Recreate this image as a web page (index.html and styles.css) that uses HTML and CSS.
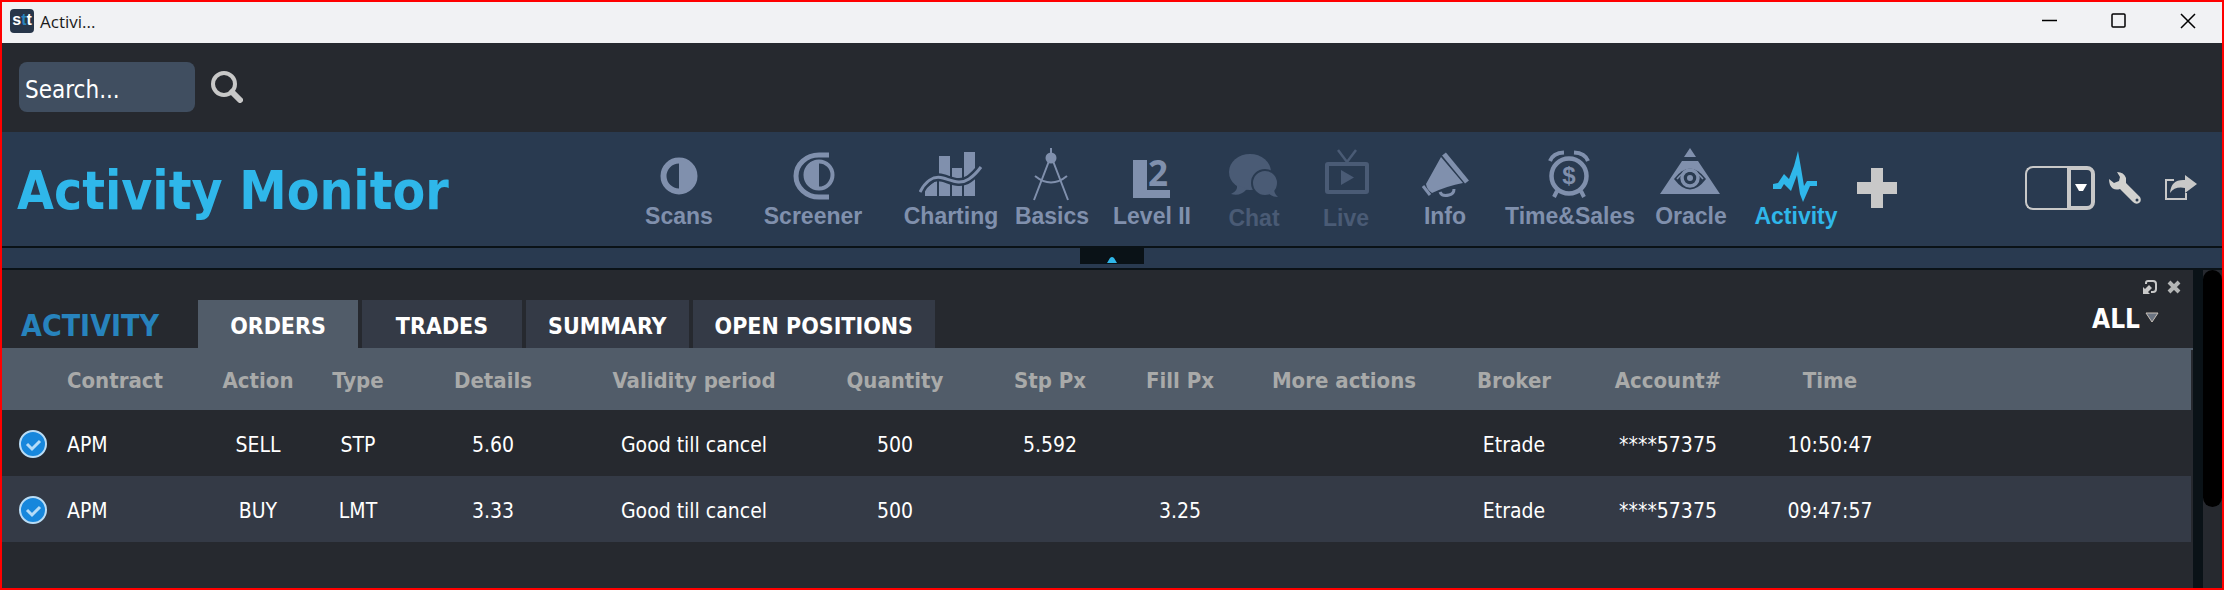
FILE: index.html
```html
<!DOCTYPE html>
<html lang="en">
<head>
    <meta charset="UTF-8">
    <meta name="viewport" content="width=device-width, initial-scale=1.0">
    <title>Activity Monitor</title>
    <link rel="stylesheet" href="styles.css">
</head>
<body>
    <div class="window">
        <div class="titlebar">
            <span class="app-icon">s<span class="app-icon-t">t</span>t</span>
            <span class="window-title">Activi...</span>
            <div class="window-controls">
                <button class="win-btn" aria-label="Minimize">
                    <svg width="16" height="16" viewBox="0 0 16 16"><path d="M0 7.500H15"/></svg>
                </button>
                <button class="win-btn" aria-label="Maximize">
                    <svg width="16" height="16" viewBox="0 0 16 16"><rect x="1" y="1" width="13" height="13" rx="1"/></svg>
                </button>
                <button class="win-btn" aria-label="Close">
                    <svg width="16" height="16" viewBox="0 0 16 16"><path d="M1 1L15 15M15 1L1 15"/></svg>
                </button>
            </div>
        </div>

        <form class="searchbar">
            <input class="search-input" type="text" placeholder="Search..." aria-label="Search">
            <button class="icon-btn" type="button" aria-label="Search">
                <svg width="32" height="32" viewBox="0 0 32 32"><circle cx="13" cy="13" r="11" fill="none" stroke="#c8c8c8" stroke-width="4"/><path d="M21 21L29 29" stroke="#c8c8c8" stroke-width="6" stroke-linecap="round"/></svg>
            </button>
        </form>

        <header class="header">
            <h1 class="page-title">Activity Monitor</h1>
            <nav class="nav">
                <a class="nav-item" href="#">
                    <svg viewBox="0 0 64 56"><circle cx="32" cy="30" r="15.500" fill="none" stroke="currentColor" stroke-width="6"/><path d="M32 14A16 16 0 0 1 32 46Z"/></svg>
                    Scans
                </a>
                <a class="nav-item" href="#">
                    <svg viewBox="0 0 64 56"><path d="M48 9H38A23 21 0 0 0 38 51H48" fill="none" stroke="currentColor" stroke-width="5"/><circle cx="38" cy="29" r="13.500" fill="none" stroke="currentColor" stroke-width="4"/><path d="M38 14A15 15 0 0 0 38 44Z"/></svg>
                    Screener
                </a>
                <a class="nav-item" href="#">
                    <svg viewBox="0 0 64 56"><path d="M6 50V43L18 34V50ZM20 10H31V50H20ZM33 22H43V50H33ZM45 6H56V50H45Z"/><path d="M1 46C6 36 14 29 24 32C34 35 41 39 50 33C56 29 59 25 62 21" fill="none" stroke="#293a50" stroke-width="8"/><path d="M1 46C6 36 14 29 24 32C34 35 41 39 50 33C56 29 59 25 62 21" fill="none" stroke="currentColor" stroke-width="3"/></svg>
                    Charting
                </a>
                <a class="nav-item" href="#">
                    <svg viewBox="0 0 64 56"><circle cx="31" cy="12" r="5.500"/><path d="M31 2V8M29 15L14 54M33 15L48 54" fill="none" stroke="currentColor" stroke-width="2"/><path d="M15 30Q31 43 47 30" fill="none" stroke="currentColor" stroke-width="2"/></svg>
                    Basics
                </a>
                <a class="nav-item" href="#">
                    <svg viewBox="0 0 64 56"><path d="M13 14H27V44H50V52H13Z"/><text class="level-two" x="28" y="40">2</text></svg>
                    Level II
                </a>
                <a class="nav-item dim" href="#">
                    <svg viewBox="0 0 64 56"><ellipse cx="28" cy="26" rx="21" ry="18"/><path d="M15 39Q16 45 9 48Q18 51 25 43Z"/><g stroke="#293a50" stroke-width="2"><circle cx="43" cy="37" r="13"/></g><path d="M46 47Q50 51 56 51Q52 48 52 42Z"/></svg>
                    Chat
                </a>
                <a class="nav-item dim" href="#">
                    <svg viewBox="0 0 64 56"><rect x="13" y="18" width="40" height="28" rx="1" fill="none" stroke="currentColor" stroke-width="4"/><path d="M27 24L40 31.500L27 39Z"/><path d="M24 4L33 16L42 4" fill="none" stroke="currentColor" stroke-width="2.500"/></svg>
                    Live
                </a>
                <a class="nav-item" href="#">
                    <svg viewBox="0 0 64 56"><path d="M28 11L50 37Q34 40 19 47Q14 44 13 38Z"/><path d="M31 8L54 36" fill="none" stroke="currentColor" stroke-width="5"/><path d="M10 40L17 49" fill="none" stroke="currentColor" stroke-width="3"/><path d="M27 46Q29 51 36 49Q41 48 41 43" fill="none" stroke="currentColor" stroke-width="3"/></svg>
                    Info
                </a>
                <a class="nav-item" href="#">
                    <svg viewBox="0 0 64 56"><circle cx="31" cy="30" r="17.500" fill="none" stroke="currentColor" stroke-width="4.500"/><path d="M12 15Q15 7 26 6.500M50 15Q47 7 36 6.500" fill="none" stroke="currentColor" stroke-width="4"/><path d="M19 45L16 51M43 45L46 51" stroke="currentColor" stroke-width="4"/><text class="dollar" x="31" y="38">$</text></svg>
                    Time&amp;Sales
                </a>
                <a class="nav-item" href="#">
                    <svg viewBox="0 0 64 56"><path d="M31 2L37 11H25ZM23 15H39L61 48H1Z"/><path d="M15 33Q31 12 47 33Q31 54 15 33Z" fill="#293a50"/><path d="M18 33Q31 17 44 33" fill="none" stroke="currentColor" stroke-width="1.500"/><circle cx="31" cy="32" r="8" fill="none" stroke="currentColor" stroke-width="3.500"/><circle cx="31" cy="32" r="3"/></svg>
                    Oracle
                </a>
                <a class="nav-item active" href="#">
                    <svg viewBox="0 0 64 56"><path d="M9 38L14 37L20 28L25 33L30 20L34 5L37 22L40 40L43 35H53V40H46L39 56L36 48L33 29L27 45L20 38L17 43H9Z"/></svg>
                    Activity
                </a>
                <button class="icon-btn add-btn" aria-label="Add">
                    <svg width="40" height="40" viewBox="0 0 40 40"><path d="M14 0H26V14H40V26H26V40H14V26H0V14H14Z" fill="#c8c8c8"/></svg>
                </button>
            </nav>
            <div class="tools">
                <div class="combo">
                    <select class="combo-select" aria-label="Layout"><option></option></select>
                    <button class="combo-arrow" aria-label="Open layouts">
                        <svg width="12" height="8" viewBox="0 0 12 8"><path d="M0 0H12L8 7H4Z" fill="#ffffff"/></svg>
                    </button>
                </div>
                <button class="icon-btn" aria-label="Settings">
                    <svg width="32" height="32" viewBox="0 0 32 32"><path d="M8 0Q15 0 17 6L17 11L31 25Q33 29 30 31Q27 33 24 30L11 17Q4 19 1 13Q0 10 0 7L5 11L10 9L11 5Z" fill="#d2d2cf"/><circle cx="28" cy="28" r="1.500" fill="#293a50"/></svg>
                </button>
                <button class="icon-btn" aria-label="Share">
                    <svg width="32" height="26" viewBox="0 0 32 26"><path d="M9 5H1V24H21V18" fill="none" stroke="#c8c8c8" stroke-width="2"/><path d="M5 18Q6 4 20 5V0L32 9L20 18V13Q10 11 5 18Z" fill="#c8c8c8"/></svg>
                </button>
            </div>
        </header>

        <div class="splitter">
            <button class="collapse-btn" aria-label="Collapse">
                <svg width="10" height="6" viewBox="0 0 10 6"><path d="M0 6L3 1Q5 -1 7 1L10 6Z" fill="#2fb7ea"/></svg>
            </button>
        </div>

        <div class="workspace">
            <main class="panel">
                <div class="panel-head">
                    <h2 class="panel-title">ACTIVITY</h2>
                    <div class="tabs">
                        <button class="tab selected">ORDERS</button>
                        <button class="tab">TRADES</button>
                        <button class="tab">SUMMARY</button>
                        <button class="tab">OPEN POSITIONS</button>
                    </div>
                    <div class="panel-side">
                        <div class="panel-actions">
                            <button class="icon-btn" aria-label="Detach">
                                <svg width="14" height="14" viewBox="0 0 14 14"><path d="M3 4V3Q3 1 5 1H10Q13 1 13 4V9Q13 12 10 12H8" fill="none" stroke="#c8c8c8" stroke-width="2"/><path d="M0 14V7L2 9L6 5L9 8L5 12L7 14Z" fill="#c8c8c8"/></svg>
                            </button>
                            <button class="icon-btn" aria-label="Close panel">
                                <svg width="14" height="14" viewBox="0 0 14 14"><path d="M2 2L12 12M12 2L2 12" stroke="#b4b6b6" stroke-width="4"/></svg>
                            </button>
                        </div>
                        <button class="filter-btn">
                            ALL
                            <svg width="14" height="11" viewBox="0 0 14 11"><path d="M1 1H13L7 10Z" fill="#6b7482" stroke="#c8c0b8" stroke-width="1"/></svg>
                        </button>
                    </div>
                </div>
                <table class="orders">
                    <colgroup>
                        <col class="col-status"><col class="col-contract"><col class="col-action"><col class="col-type">
                        <col class="col-details"><col class="col-validity"><col class="col-details"><col class="col-stp">
                        <col class="col-fill"><col class="col-more"><col class="col-stp"><col class="col-account">
                        <col class="col-time"><col>
                    </colgroup>
                    <thead>
                        <tr>
                            <th></th>
                            <th class="left">Contract</th>
                            <th>Action</th>
                            <th>Type</th>
                            <th>Details</th>
                            <th>Validity period</th>
                            <th>Quantity</th>
                            <th>Stp Px</th>
                            <th>Fill Px</th>
                            <th>More actions</th>
                            <th>Broker</th>
                            <th>Account#</th>
                            <th>Time</th>
                            <th></th>
                        </tr>
                    </thead>
                    <tbody>
                        <tr>
                            <td class="status"><svg width="28" height="28" viewBox="0 0 28 28"><circle cx="14" cy="14" r="13" fill="#1787dc" stroke="#b9dcf5" stroke-width="2"/><path d="M8 14L13 19L21 11" fill="none" stroke="#b5dcf8" stroke-width="3"/></svg></td>
                            <td class="left">APM</td>
                            <td>SELL</td>
                            <td>STP</td>
                            <td>5.60</td>
                            <td>Good till cancel</td>
                            <td>500</td>
                            <td>5.592</td>
                            <td></td>
                            <td></td>
                            <td>Etrade</td>
                            <td>****57375</td>
                            <td>10:50:47</td>
                            <td></td>
                        </tr>
                        <tr>
                            <td class="status"><svg width="28" height="28" viewBox="0 0 28 28"><circle cx="14" cy="14" r="13" fill="#1787dc" stroke="#b9dcf5" stroke-width="2"/><path d="M8 14L13 19L21 11" fill="none" stroke="#b5dcf8" stroke-width="3"/></svg></td>
                            <td class="left">APM</td>
                            <td>BUY</td>
                            <td>LMT</td>
                            <td>3.33</td>
                            <td>Good till cancel</td>
                            <td>500</td>
                            <td></td>
                            <td>3.25</td>
                            <td></td>
                            <td>Etrade</td>
                            <td>****57375</td>
                            <td>09:47:57</td>
                            <td></td>
                        </tr>
                    </tbody>
                </table>
            </main>
            <div class="scroll-track">
                <div class="scroll-thumb"></div>
            </div>
        </div>
    </div>
</body>
</html>
```

FILE: styles.css
```css
* {
    box-sizing: border-box;
}

body {
    margin: 0;
    font-family: "DejaVu Sans Condensed", "DejaVu Sans", sans-serif;
    font-size: 21px;
    color: #ffffff;
    background-color: #26292f;
}

button {
    font: inherit;
    color: inherit;
    background: none;
    border: none;
    padding: 0;
    cursor: pointer;
}

svg {
    display: block;
}

.window {
    display: flex;
    flex-direction: column;
    min-height: 100vh;
    border: 2px solid #ff0000;
}

/* Title bar */
.titlebar {
    display: flex;
    align-items: center;
    height: 41px;
    padding-left: 8px;
    background-color: #f1f2f4;
    color: #1b1b1b;
}

.app-icon {
    width: 24px;
    height: 24px;
    margin: 0 6px 4px 0;
    border-radius: 4px;
    background-color: #27364a;
    color: #ffffff;
    font: bold 16px/22px "Liberation Sans", Arial, sans-serif;
    text-align: center;
}

.app-icon-t {
    color: #2783bd;
}

.window-title {
    padding-bottom: 2px;
    font: 17px/24px "Segoe UI", "Open Sans", sans-serif;
}

.window-controls {
    display: flex;
    align-self: flex-start;
    margin-left: auto;
}

.win-btn {
    display: flex;
    justify-content: center;
    align-items: center;
    width: 69px;
    height: 37px;
}

.win-btn svg {
    fill: none;
    stroke: #000000;
    stroke-width: 1.5;
}

/* Search */
.searchbar {
    display: flex;
    align-items: center;
    gap: 16px;
    height: 89px;
    padding: 0 17px 1px;
}

.search-input {
    width: 176px;
    height: 50px;
    padding: 5px 6px 0;
    border: none;
    border-radius: 8px;
    background-color: #404e60;
    color: #ffffff;
    font: inherit;
    font-size: 24px;
}

.search-input::placeholder {
    color: #ffffff;
    opacity: 1;
}

/* Header */
.header {
    display: grid;
    grid-template-columns: 625px 1fr auto;
    align-items: start;
    height: 116px;
    padding-right: 25px;
    border-bottom: 2px solid #0a1217;
    background-color: #293a50;
}

.page-title {
    margin: 0;
    padding: 27px 0 0 15px;
    font-size: 53px;
    line-height: 64px;
    color: #2fb7ea;
}

.nav {
    display: grid;
    grid-template-columns: 104px 164px 112px 90px 110px 94px 90px 108px 142px 100px 110px 52px;
    padding-top: 14px;
}

.nav-item {
    display: flex;
    flex-direction: column;
    align-items: center;
    color: #8090ad;
    font: bold 23px/28px "Liberation Sans", Arial, sans-serif;
    text-decoration: none;
    white-space: nowrap;
}

.nav-item svg {
    width: 64px;
    height: 56px;
    fill: currentColor;
}

.nav-item.dim {
    color: #4a5b75;
}

.nav-item.dim svg {
    margin-bottom: 2px;
}

.nav-item.active {
    color: #2fb7ea;
}

.level-two {
    font: bold 35px "Open Sans", sans-serif;
}

.dollar {
    font: bold 24px "Liberation Sans", Arial, sans-serif;
    text-anchor: middle;
}

.add-btn {
    justify-self: center;
    align-self: start;
    padding-top: 22px;
}

.tools {
    display: flex;
    align-items: center;
    height: 112px;
}

.tools .icon-btn {
    margin-left: 24px;
}

.combo {
    display: flex;
    width: 70px;
    height: 44px;
    margin-right: -10px;
}

.combo-select {
    width: 42px;
    appearance: none;
    border: 2px solid #c8c8c8;
    border-right: none;
    border-radius: 8px 0 0 8px;
    background: none;
    color: #ffffff;
}

.combo-arrow {
    display: flex;
    justify-content: center;
    align-items: center;
    width: 28px;
    border: 4px solid #c8c8c8;
    border-radius: 0 8px 8px 0;
}

.splitter {
    height: 22px;
    border-bottom: 2px solid #0a1217;
    background-color: #293a50;
}

.collapse-btn {
    display: flex;
    justify-content: center;
    align-items: flex-end;
    width: 64px;
    height: 16px;
    margin: 0 auto;
    padding-bottom: 1px;
    background-color: #0a1217;
}

/* Panel */
.workspace {
    display: flex;
    flex: 1;
}

.panel {
    flex: 1;
    border-right: 10px solid #0a1217;
}

.panel-head {
    display: flex;
    align-items: flex-end;
    height: 80px;
    border-bottom: 2px solid #515c69;
}

.panel-title {
    width: 196px;
    margin: 0;
    padding: 0 0 4px 19px;
    font-size: 30px;
    line-height: 36px;
    color: #2783bd;
}

.tabs {
    display: flex;
    gap: 4px;
}

.tab {
    min-width: 160px;
    height: 48px;
    padding: 4px 22px 0;
    background-color: #343a46;
    font-size: 23px;
    font-weight: bold;
}

.tab.selected {
    background-color: #515c69;
}

.panel-side {
    align-self: flex-start;
    margin-left: auto;
    padding: 10px 12px 0 0;
}

.panel-actions {
    display: flex;
    justify-content: flex-end;
    gap: 10px;
}

.filter-btn {
    display: flex;
    align-items: center;
    gap: 5px;
    margin: 9px 22px 0 0;
    font-size: 26px;
    font-weight: bold;
    line-height: 32px;
}

.filter-btn svg {
    margin-bottom: 4px;
}

/* Orders table */
.orders {
    width: calc(100% - 2px);
    table-layout: fixed;
    border-collapse: collapse;
}

.orders th,
.orders td {
    height: 66px;
    padding: 3px 0 0;
    text-align: center;
    white-space: nowrap;
}

.orders th {
    height: 60px;
    padding: 0;
    background-color: #515c69;
    color: #a9aaa9;
    font-size: 22px;
}

.orders .left {
    text-align: left;
}

.orders .status {
    padding: 2px 0 0 17px;
}

.orders tbody tr:nth-child(even) {
    background-color: #343a46;
}

.col-status { width: 65px; }
.col-contract { width: 139px; }
.col-action { width: 104px; }
.col-type { width: 96px; }
.col-details { width: 174px; }
.col-validity { width: 228px; }
.col-stp { width: 136px; }
.col-fill { width: 124px; }
.col-more { width: 204px; }
.col-account { width: 172px; }
.col-time { width: 152px; }

.scroll-track {
    width: 19px;
}

.scroll-thumb {
    height: 237px;
    border-radius: 10px;
    background-color: #000000;
}
```
